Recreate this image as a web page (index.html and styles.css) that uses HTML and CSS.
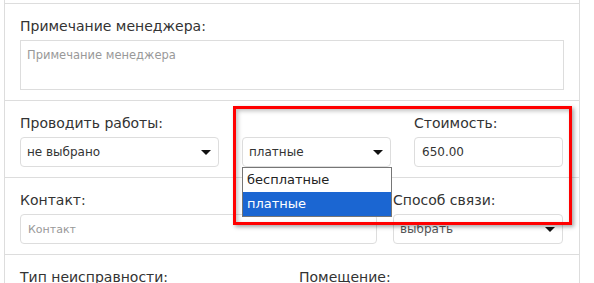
FILE: index.html
```html
<!DOCTYPE html>
<html lang="ru">
<head>
    <meta charset="UTF-8">
    <meta name="viewport" content="width=device-width, initial-scale=1.0">
    <title>Заявка</title>
    <link rel="stylesheet" href="styles.css">
</head>
<body>
    <div class="panel">
        <div class="section stub"></div>

        <div class="section">
            <label class="field-label" for="note">Примечание менеджера:</label>
            <textarea id="note" class="note" placeholder="Примечание менеджера"></textarea>
        </div>

        <div class="section row-works">
            <div class="field">
                <label class="field-label">Проводить работы:</label>
                <div class="select">не выбрано</div>
            </div>
            <div class="field pay-field">
                <label class="field-label">&nbsp;</label>
                <div class="select">платные</div>
                <ul class="dropdown">
                    <li>бесплатные</li>
                    <li class="active">платные</li>
                </ul>
            </div>
            <div class="field">
                <label class="field-label" for="cost">Стоимость:</label>
                <input id="cost" class="input" type="text" value="650.00">
            </div>
            <div class="highlight"></div>
        </div>

        <div class="section row-contact">
            <div class="field">
                <label class="field-label" for="contact">Контакт:</label>
                <input id="contact" class="input small" type="text" placeholder="Контакт">
            </div>
            <div class="field">
                <label class="field-label">Способ связи:</label>
                <div class="select muted">выбрать</div>
            </div>
        </div>

        <div class="section row-fault">
            <label class="field-label">Тип неисправности:</label>
            <label class="field-label">Помещение:</label>
        </div>
    </div>
</body>
</html>
```

FILE: styles.css
```css
body {
    margin: 0;
    background: #fff;
    font-family: "DejaVu Sans", Verdana, sans-serif;
    color: #333;
}
.panel {
    width: 574px;
    margin-left: 4px;
    border-left: 1px solid #ddd;
    border-right: 1px solid #ddd;
    position: relative;
}
.section {
    border-top: 1px solid #ddd;
    padding: 12px 15px 10px;
}
.stub {
    border-top: none;
    padding: 0;
    height: 3px;
}
.field-label {
    display: block;
    font-size: 14px;
    line-height: 20px;
    margin-bottom: 4px;
    color: #333;
}
.note {
    display: block;
    box-sizing: border-box;
    width: 100%;
    height: 50px;
    border: 1px solid #ddd;
    padding: 7px 6px;
    font-family: inherit;
    font-size: 11.5px;
    resize: none;
    outline: none;
}
.note::placeholder,
.input::placeholder {
    color: #999;
}
.row-works {
    display: grid;
    grid-template-columns: 199px 149px 149px;
    column-gap: 23px;
    position: relative;
}
.row-contact {
    display: grid;
    grid-template-columns: 357px 170px;
    column-gap: 16px;
}
.row-fault {
    display: grid;
    grid-template-columns: 279px 1fr;
}
.field {
    position: relative;
}
.select,
.input {
    box-sizing: border-box;
    width: 100%;
    height: 30px;
    border: 1px solid #ddd;
    border-radius: 4px;
    background: #fff;
    font-family: inherit;
    font-size: 12px;
    color: #333;
}
.select {
    display: flex;
    align-items: center;
    padding: 0 6px;
    position: relative;
}
.select::after {
    content: "";
    position: absolute;
    right: 7px;
    top: 12px;
    border-left: 5px solid transparent;
    border-right: 5px solid transparent;
    border-top: 5px solid #111;
}
.select.muted {
    color: #555;
}
.input {
    display: block;
    padding: 0 7px;
    outline: none;
}
.input.small {
    font-size: 11px;
}
.dropdown {
    position: absolute;
    left: 0;
    top: 54px;
    width: 150px;
    box-sizing: border-box;
    margin: 0;
    padding: 0;
    list-style: none;
    border: 1px solid #767676;
    background: #fff;
    z-index: 3;
}
.dropdown li {
    height: 24px;
    line-height: 24px;
    padding: 0 4px;
    font-size: 13px;
    color: #222;
}
.dropdown li.active {
    background: #1b66d2;
    color: #fff;
}
.highlight {
    position: absolute;
    left: 228px;
    top: 5px;
    width: 333px;
    height: 113px;
    border: 3px solid #f00;
    box-shadow: 2px 2px 4px rgba(0, 0, 0, 0.35), inset 2px 2px 4px rgba(0, 0, 0, 0.25);
    z-index: 4;
    pointer-events: none;
}
```
